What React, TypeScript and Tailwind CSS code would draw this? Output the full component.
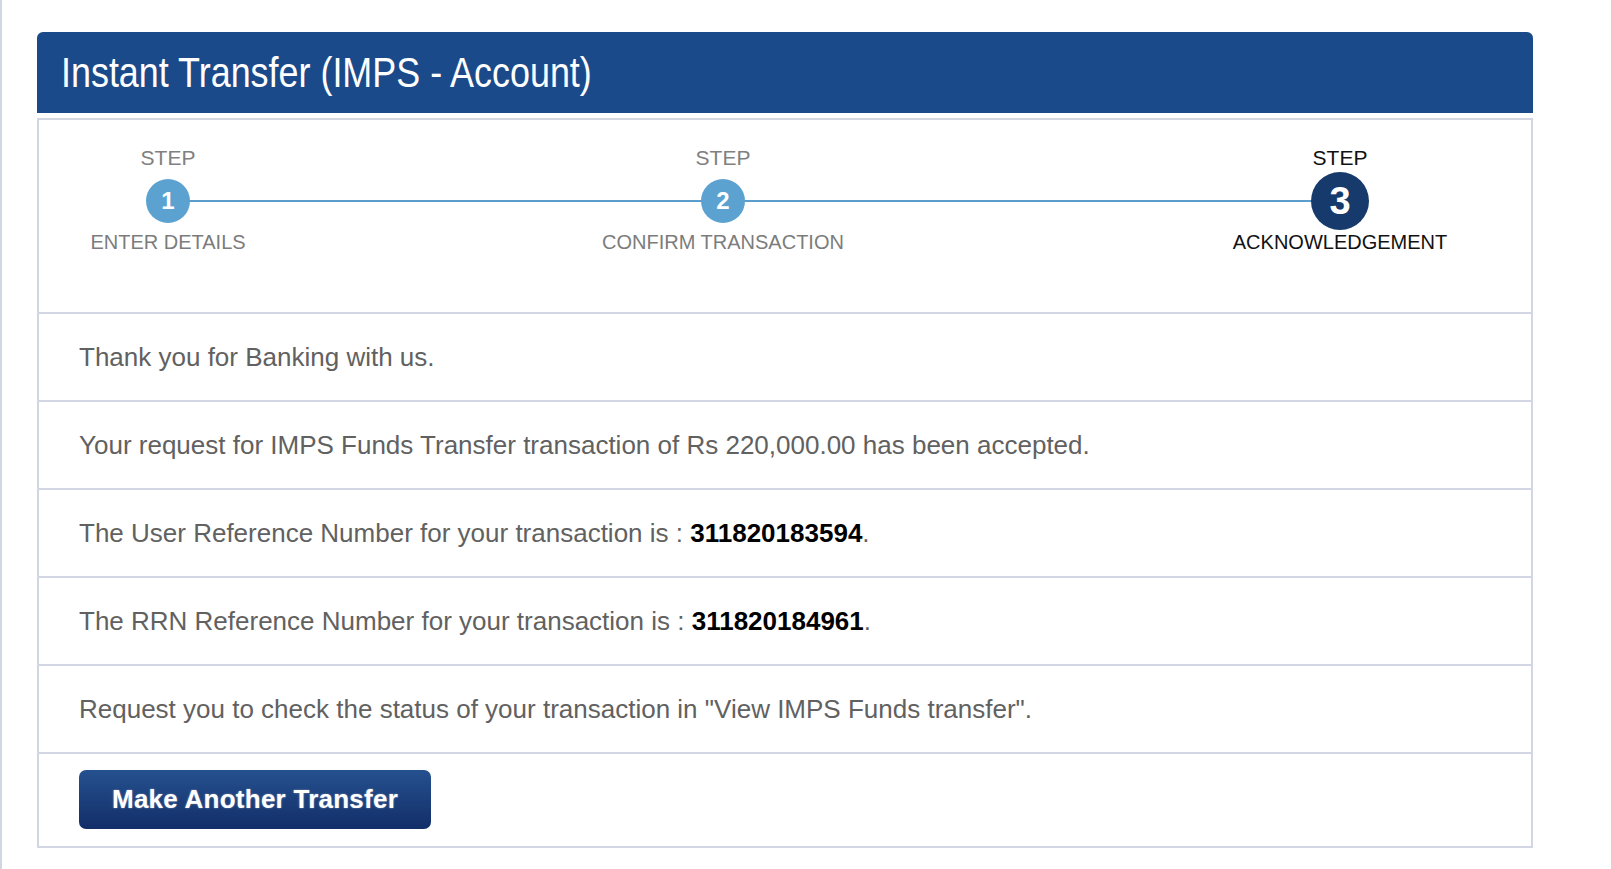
type Step = {
	num: number;
	label: string;
	active?: boolean;
};

const steps: Step[] = [
	{ num: 1, label: 'ENTER DETAILS' },
	{ num: 2, label: 'CONFIRM TRANSACTION' },
	{ num: 3, label: 'ACKNOWLEDGEMENT', active: true },
];

function StepItem({ num, label, active }: Step) {
	return (
		<div className="flex flex-col items-center">
			<div className={`text-[21px] leading-[24px] ${active ? 'text-[#111]' : 'text-[#808080]'}`}>STEP</div>
			<div className="mt-[2px] h-[58px] flex items-center justify-center">
				{active ? (
					<div className="w-[58px] h-[58px] rounded-full bg-[#163a6c] text-white font-bold text-[38px] flex items-center justify-center">
						{num}
					</div>
				) : (
					<div className="w-[44px] h-[44px] rounded-full bg-[#5ba2d1] text-white font-bold text-[24px] flex items-center justify-center">
						{num}
					</div>
				)}
			</div>
			<div className={`text-[20px] leading-[24px] ${active ? 'text-[#111]' : 'text-[#7c7c7c]'}`}>{label}</div>
		</div>
	);
}

function Row({ children }: { children: React.ReactNode }) {
	return (
		<div className="border-t-2 border-[#d2d5e2] h-[88px] pl-[40px] flex items-center text-[26px] text-[#616161]">
			<p>{children}</p>
		</div>
	);
}

export default function App() {
	return (
		<div className="min-h-screen bg-white border-l-2 border-[#d2d5e2] pt-[32px] pl-[35px] font-['Liberation_Sans',Arial,sans-serif]">
			<div className="w-[1496px]">
				<div className="h-[81px] bg-[#1b4a8b] rounded-t-[6px] pl-[24px] flex items-center">
					{/* no narrow face installed, so squeeze the regular one */}
					<h1 className="inline-block origin-left scale-x-[0.835] whitespace-nowrap text-white text-[43px] font-['Liberation_Sans_Narrow','Arial_Narrow','Liberation_Sans',sans-serif]">
						Instant Transfer (IMPS - Account)
					</h1>
				</div>

				<div className="mt-[5px] border-2 border-[#d2d5e2]">
					{/* steps */}
					<div className="relative h-[192px] pt-[26px]">
						<div className="absolute top-[80px] left-[129px] w-[1173px] h-[2px] bg-[#5b9dcc]" />
						<div className="relative grid grid-cols-[258px_852px_1fr]">
							{steps.map((s) => (
								<StepItem key={s.num} {...s} />
							))}
						</div>
					</div>

					<Row>Thank you for Banking with us.</Row>
					<Row>Your request for IMPS Funds Transfer transaction of Rs 220,000.00 has been accepted.</Row>
					<Row>
						The User Reference Number for your transaction is : <b className="text-black">311820183594</b>.
					</Row>
					<Row>
						The RRN Reference Number for your transaction is : <b className="text-black">311820184961</b>.
					</Row>
					<Row>Request you to check the status of your transaction in "View IMPS Funds transfer".</Row>

					<div className="border-t-2 border-[#d2d5e2] h-[94px] pl-[40px] pt-[16px]">
						<button className="h-[59px] px-[33px] rounded-[7px] bg-gradient-to-b from-[#25518f] to-[#132e68] text-white font-bold text-[26px] tracking-[0.25px] [text-shadow:0_0_2px_rgba(255,255,255,0.45)]">
							Make Another Transfer
						</button>
					</div>
				</div>
			</div>
		</div>
	);
}
